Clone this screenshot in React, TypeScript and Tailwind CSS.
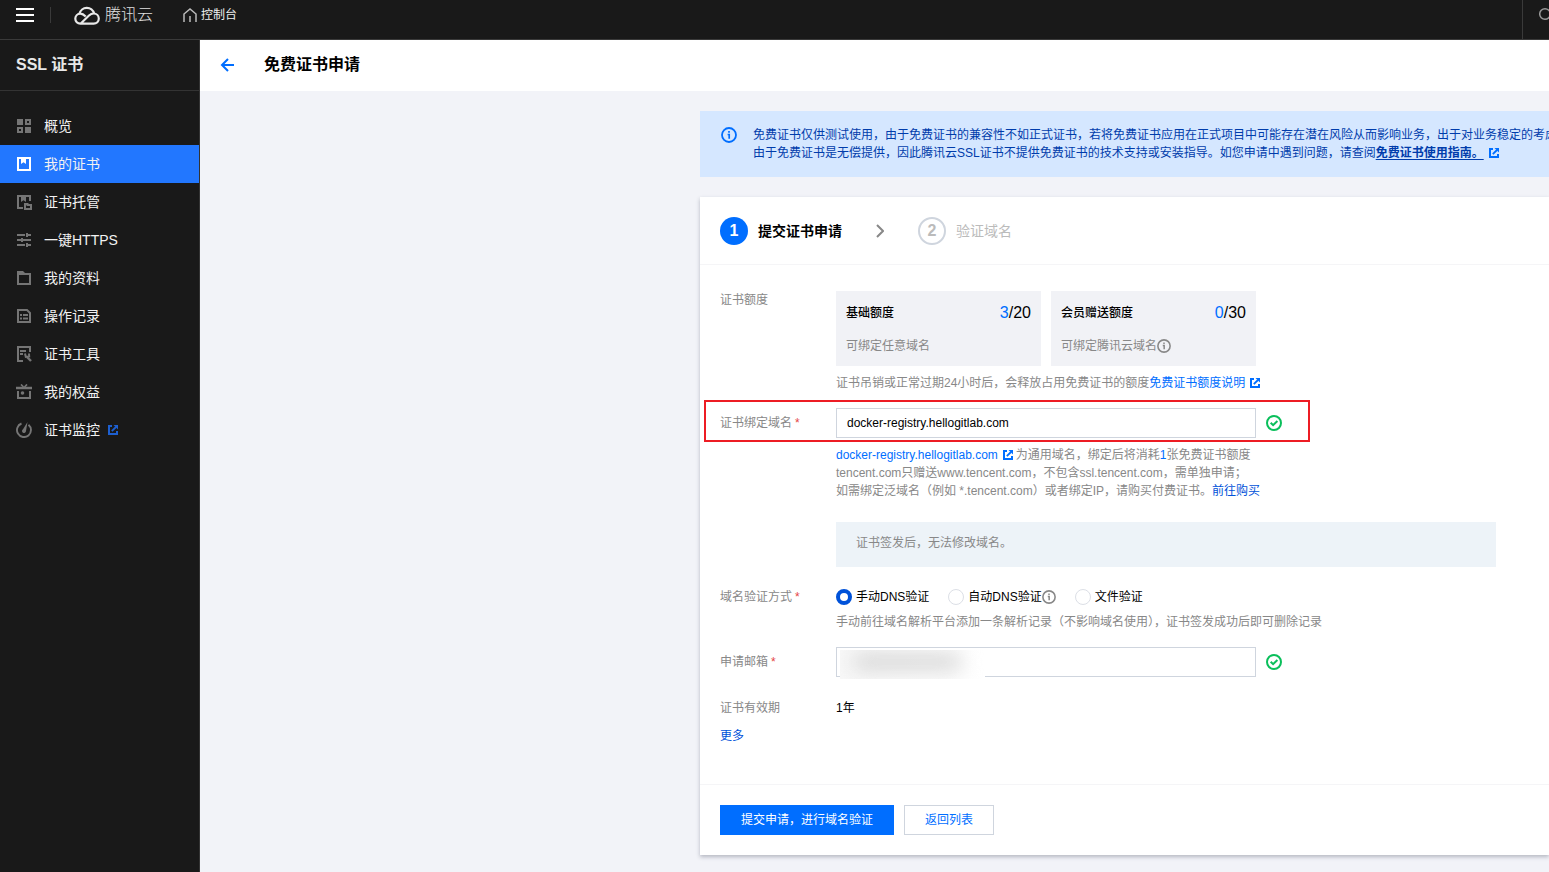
import React, { useState } from "react";

type IconProps = { className?: string };

function MenuSvg({ children }: { children: React.ReactNode }) {
  return (
    <svg viewBox="0 0 16 16" className="size-4 shrink-0" fill="none" stroke="currentColor" strokeWidth="2" aria-hidden="true">
      {children}
    </svg>
  );
}

function ExternalIcon({ className = "" }: IconProps) {
  return (
    <svg viewBox="0 0 10 10" className={`size-[10px] shrink-0 ${className}`} fill="none" stroke="currentColor" strokeWidth="2" aria-hidden="true">
      <path d="M4 1H1v8h8V6" />
      <path d="M3.8 6.2 8 2" strokeWidth="1.8" />
      <path d="M5.5 0H10v4.5z" fill="currentColor" stroke="none" />
    </svg>
  );
}

function InfoIcon({ className = "" }: IconProps) {
  return (
    <svg viewBox="0 0 16 16" className={`shrink-0 ${className}`} fill="none" stroke="currentColor" aria-hidden="true">
      <circle cx="8" cy="8" r="7" strokeWidth="1.8" />
      <path d="M8 4v1.8M6.6 7.5h1.6v4.3" strokeWidth="1.7" />
    </svg>
  );
}

function SuccessIcon() {
  return (
    <svg viewBox="0 0 16 16" className="size-4 shrink-0 text-[#0abf5b]" fill="none" stroke="currentColor" strokeWidth="2" aria-hidden="true">
      <circle cx="8" cy="8" r="7" />
      <path d="m4.7 7.8 2.4 2.4 4.3-4.2" />
    </svg>
  );
}

function CloudLogo() {
  return (
    <svg viewBox="0 0 26 20" className="h-5 w-[26px] shrink-0 text-[#e8e8e8]" fill="none" stroke="currentColor" strokeWidth="2.2" aria-hidden="true">
      <path d="M11.700 11.600C10 9.800 8.300 8.700 6.300 8.700a5 5 0 0 0 0 10h13.400a5.100 5.100 0 0 0 0-10.200c-2 0-3.300.7-4.700 2L7 18.200" />
      <path d="M5.500 8.700a7.500 7.500 0 0 1 14.600-.2" />
    </svg>
  );
}

const menu: { label: string; icon: React.ReactNode; external?: boolean }[] = [
  {
    label: "概览",
    icon: (
      <MenuSvg>
        <path d="M1 1h6v6H1zM9 9h6v6H9z" fill="currentColor" stroke="none" />
        <path d="M10 2h4v4h-4zM2 10h4v4H2z" />
      </MenuSvg>
    ),
  },
  {
    label: "我的证书",
    icon: (
      <MenuSvg>
        <path d="M2 2h12v12H2z" />
        <path d="M5 2h5v6L7.500 6.300 5 8z" fill="currentColor" stroke="none" />
      </MenuSvg>
    ),
  },
  {
    label: "证书托管",
    icon: (
      <MenuSvg>
        <path d="M7 14H2V2h12v5" />
        <path d="M5 2h5v6L7.500 6.300 5 8z" fill="currentColor" stroke="none" />
        <path d="M9 10h2.500v1H15v4H9z" />
      </MenuSvg>
    ),
  },
  {
    label: "一键HTTPS",
    icon: (
      <MenuSvg>
        <path d="M1 3h8M11 3h4M11 1v4M1 8h4M7 8h8M6 6v4M1 13h8M11 13h4M11 11v4" />
      </MenuSvg>
    ),
  },
  {
    label: "我的资料",
    icon: (
      <MenuSvg>
        <path d="M2 4h12v10H2z" />
        <path d="M1 1h6l2 2v1H1z" fill="currentColor" stroke="none" />
      </MenuSvg>
    ),
  },
  {
    label: "操作记录",
    icon: (
      <MenuSvg>
        <path d="M2 2h9l3 3v9H2z" />
        <path d="M4 7h2M7 7h5M4 10.500h2M7 10.500h5" />
      </MenuSvg>
    ),
  },
  {
    label: "证书工具",
    icon: (
      <MenuSvg>
        <path d="M7 15H2V1h12v5M4 5h6M4 8h3" />
        <path d="m11 11 4 4" strokeWidth="2.400" />
        <path d="M9 7.500 9.800 11l3.400-.5-.2-3" />
      </MenuSvg>
    ),
  },
  {
    label: "我的权益",
    icon: (
      <MenuSvg>
        <path d="M0 4h16" strokeWidth="2.500" />
        <path d="M5 .5 7.500 3M11 .5 8.500 3" strokeWidth="1.700" />
        <path d="M2 7v7h12V7" />
        <circle cx="6.500" cy="9" r="1.800" fill="currentColor" stroke="none" />
      </MenuSvg>
    ),
  },
  {
    label: "证书监控",
    external: true,
    icon: (
      <MenuSvg>
        <path d="M5.500 1.500a7 7 0 1 0 7 1.200" strokeWidth="1.900" />
        <path d="M11.500 0 10 9a2 2 0 1 1-3-1.800z" fill="currentColor" stroke="none" />
      </MenuSvg>
    ),
  },
];

function Field({ label, htmlFor, required, labelClass = "", children }: {
  label: string;
  htmlFor?: string;
  required?: boolean;
  labelClass?: string;
  children: React.ReactNode;
}) {
  const content = (
    <>
      {label}
      {required && <span className="ml-[3px] text-[#e54545]">*</span>}
    </>
  );
  const cls = `w-[116px] shrink-0 text-[#888] ${labelClass}`;
  return (
    <div className="flex items-start">
      {htmlFor ? <label htmlFor={htmlFor} className={cls}>{content}</label> : <div className={cls}>{content}</div>}
      <div className="min-w-0 flex-1">{children}</div>
    </div>
  );
}

function Quota({ title, used, total, note, info }: { title: string; used: number; total: number; note: string; info?: boolean }) {
  return (
    <div className="w-[205px] bg-[#f1f2f6] px-[10px] pt-[10px] pb-[11px]">
      <div className="flex h-6 items-center justify-between">
        <span className="font-medium text-black">{title}</span>
        <span className="text-base text-black"><span className="text-[#006eff]">{used}</span>/{total}</span>
      </div>
      <div className="mt-3 flex items-center text-[#888]">
        {note}
        {info && <InfoIcon className="size-[14px]" />}
      </div>
    </div>
  );
}

const methods = ["手动DNS验证", "自动DNS验证", "文件验证"];

export default function App() {
  const [method, setMethod] = useState(0);
  const [domain, setDomain] = useState("docker-registry.hellogitlab.com");
  const [email, setEmail] = useState("");

  return (
    <div className="flex h-screen flex-col overflow-hidden bg-[#f2f3f8] font-['Liberation_Sans','Noto_Sans_CJK_SC',sans-serif] text-xs/[18px] text-black">
      <header className="flex h-10 shrink-0 items-start border-b border-[#3a3a3a] bg-[#191919] text-[#f0f0f0]">
        <div className="flex h-[30px] items-center">
          <button type="button" aria-label="菜单" className="ml-4 flex w-[18px] flex-col gap-[4px]">
            <span className="h-[2px] bg-white" />
            <span className="h-[2px] bg-white" />
            <span className="h-[2px] bg-white" />
          </button>
          <span className="ml-4 h-4 w-px bg-[#3a3a3a]" />
          <a href="#" className="ml-[23px] flex items-center gap-[5px] text-base font-light text-[#e0e0e0]">
            <CloudLogo />
            腾讯云
          </a>
          <a href="#" className="ml-[30px] flex items-center gap-1">
            <svg viewBox="0 0 14 14" className="size-[14px]" fill="none" stroke="#bbb" strokeWidth="1.500" aria-hidden="true">
              <path d="M1 14V6l6-5 6 5v8M7 8v6" />
            </svg>
            控制台
          </a>
        </div>
        <div className="ml-auto flex h-full w-[27px] overflow-hidden border-l border-[#3a3a3a]">
          <button type="button" aria-label="搜索" className="ml-4 flex h-[30px] items-center">
            <svg viewBox="0 0 16 16" className="size-4" fill="none" stroke="#999" strokeWidth="1.500" aria-hidden="true">
              <circle cx="6" cy="7" r="5.300" />
              <path d="m10 11 4 4" />
            </svg>
          </button>
        </div>
      </header>

      <div className="flex min-h-0 flex-1">
        <aside className="w-[200px] shrink-0 border-r border-[#333] bg-[#191919]">
          <h2 className="flex h-[51px] items-center border-b border-[#333] px-4 text-base font-bold text-[#e8e8e8]">SSL 证书</h2>
          <nav className="pt-4 text-sm">
            {menu.map((item, i) => (
              <a
                key={item.label}
                href="#"
                className={`flex h-[38px] items-center pl-4 ${i === 1 ? "bg-[#2277ff] text-white" : "text-[#757575]"}`}
              >
                {item.icon}
                <span className="ml-3 text-[#f2f2f2]">{item.label}</span>
                {item.external && <ExternalIcon className="ml-2 text-[#1d5fd0]" />}
              </a>
            ))}
          </nav>
        </aside>

        <main className="min-w-0 flex-1 overflow-hidden">
          <div className="flex h-[51px] items-center bg-white px-5 pb-px">
            <button type="button" aria-label="返回" className="text-[#006eff]">
              <svg viewBox="0 0 14 14" className="size-[14px]" fill="none" stroke="currentColor" strokeWidth="2" aria-hidden="true">
                <path d="M14 7H2M8 1 2 7l6 6" />
              </svg>
            </button>
            <h1 className="ml-[30px] text-base font-bold">免费证书申请</h1>
          </div>

          <div className="ml-[500px] pt-5">
            <div className="flex gap-4 overflow-hidden bg-[#d5e7ff] py-[15px] pl-[21px] whitespace-nowrap text-[#003cab]">
              <InfoIcon className="mt-px size-4 text-[#006eff]" />
              <div>
                <p>免费证书仅供测试使用，由于免费证书的兼容性不如正式证书，若将免费证书应用在正式项目中可能存在潜在风险从而影响业务，出于对业务稳定的考虑</p>
                <p className="flex items-center">
                  由于免费证书是无偿提供，因此腾讯云SSL证书不提供免费证书的技术支持或安装指导。如您申请中遇到问题，请查阅
                  <a href="#" className="font-bold underline underline-offset-2">免费证书使用指南。</a>
                  <ExternalIcon className="ml-[5px] text-[#006eff]" />
                </p>
              </div>
            </div>

            <section className="mt-5 bg-white shadow-[0_2px_4px_rgba(54,58,80,0.32)]">
              <ol className="flex h-[68px] items-center border-b border-[#f5f5f7] px-5 text-sm">
                <li className="flex items-center font-bold">
                  <span className="flex size-7 items-center justify-center rounded-full bg-[#006eff] text-base text-white">1</span>
                  <span className="ml-[10px]">提交证书申请</span>
                </li>
                <li aria-hidden="true" className="mx-[34px]">
                  <svg viewBox="0 0 8 14" className="h-[14px] w-2" fill="none" stroke="#888" strokeWidth="2">
                    <path d="m1 1 6 6-6 6" />
                  </svg>
                </li>
                <li className="flex items-center text-[#bbb]">
                  <span className="flex size-7 items-center justify-center rounded-full border-2 border-[#cfd5de] text-base font-bold">2</span>
                  <span className="ml-[10px]">验证域名</span>
                </li>
              </ol>

              <form onSubmit={(e) => e.preventDefault()}>
                <div className="px-5 pt-[26px] pb-[39px]">
                  <Field label="证书额度">
                    <div className="flex gap-[10px]">
                      <Quota title="基础额度" used={3} total={20} note="可绑定任意域名" />
                      <Quota title="会员赠送额度" used={0} total={30} note="可绑定腾讯云域名" info />
                    </div>
                    <p className="mt-2 flex items-center text-[#888]">
                      证书吊销或正常过期24小时后，会释放占用免费证书的额度
                      <a href="#" className="flex items-center gap-[5px] text-[#006eff]">免费证书额度说明<ExternalIcon /></a>
                    </p>
                  </Field>

                  <div className="relative mt-4">
                    <div aria-hidden="true" className="pointer-events-none absolute -top-2 -left-4 h-[42px] w-[606px] border-2 border-[#ed1c24]" />
                    <Field label="证书绑定域名" htmlFor="domain" required labelClass="pt-[6px]">
                      <div className="flex items-center gap-[10px]">
                        <input
                          id="domain"
                          type="text"
                          value={domain}
                          onChange={(e) => setDomain(e.target.value)}
                          className="h-[30px] w-[420px] border border-[#cfd5de] bg-white px-[10px] outline-none"
                        />
                        <SuccessIcon />
                      </div>
                      <div className="mt-2 text-[#888]">
                        <p className="flex items-center">
                          <a href="#" className="flex items-center gap-[5px] text-[#006eff]">docker-registry.hellogitlab.com<ExternalIcon /></a>
                          <span className="ml-[3px]">为通用域名，绑定后将消耗<span className="text-[#006eff]">1</span>张免费证书额度</span>
                        </p>
                        <p>tencent.com只赠送www.tencent.com，不包含ssl.tencent.com，需单独申请；</p>
                        <p>如需绑定泛域名（例如 *.tencent.com）或者绑定IP，请购买付费证书。<a href="#" className="text-[#0052d9]">前往购买</a></p>
                      </div>
                      <div className="mt-[22px] max-w-[660px] bg-[#edf3f8] px-5 pt-3 pb-[15px] text-[#888]">证书签发后，无法修改域名。</div>
                    </Field>
                  </div>

                  <div className="mt-[21px]">
                    <Field label="域名验证方式" required>
                      <div className="flex items-center gap-[19px]">
                        {methods.map((name, i) => (
                          <label key={name} className="flex items-center">
                            <input
                              type="radio"
                              name="method"
                              checked={method === i}
                              onChange={() => setMethod(i)}
                              className="mr-1 size-4 appearance-none rounded-full border border-[#dcdfe6] bg-white checked:border-4 checked:border-[#0052d9]"
                            />
                            {name}
                            {i === 1 && <InfoIcon className="size-[14px] text-[#888]" />}
                          </label>
                        ))}
                      </div>
                      <p className="mt-[7px] text-[#888]">手动前往域名解析平台添加一条解析记录（不影响域名使用），证书签发成功后即可删除记录</p>
                    </Field>
                  </div>

                  <div className="mt-4">
                    <Field label="申请邮箱" htmlFor="email" required labelClass="pt-[6px]">
                      <div className="relative flex items-center gap-[10px]">
                        <input
                          id="email"
                          type="email"
                          value={email}
                          onChange={(e) => setEmail(e.target.value)}
                          className="h-[30px] w-[420px] border border-[#cfd5de] bg-white px-[10px] outline-none"
                        />
                        <SuccessIcon />
                        <div aria-hidden="true" className="pointer-events-none absolute top-[3px] left-1 h-[29px] w-[145px] overflow-hidden bg-linear-to-r from-[#f8f8f8] to-white">
                          <div className="mt-1 ml-3 h-4 w-[110px] rounded-full bg-[#d4d4d4] blur-[10px]" />
                        </div>
                      </div>
                    </Field>
                  </div>

                  <div className="mt-[22px]">
                    <Field label="证书有效期">1年</Field>
                  </div>
                  <button type="button" className="mt-[10px] block text-[#0052d9]">更多</button>
                </div>

                <div className="flex gap-[10px] border-t border-[#f5f5f7] p-5">
                  <button type="submit" className="h-[30px] bg-[#006eff] px-[21px] text-white">提交申请，进行域名验证</button>
                  <button type="button" className="h-[30px] border border-[#cfd5de] bg-white px-5 text-[#006eff]">返回列表</button>
                </div>
              </form>
            </section>
          </div>
        </main>
      </div>
    </div>
  );
}
